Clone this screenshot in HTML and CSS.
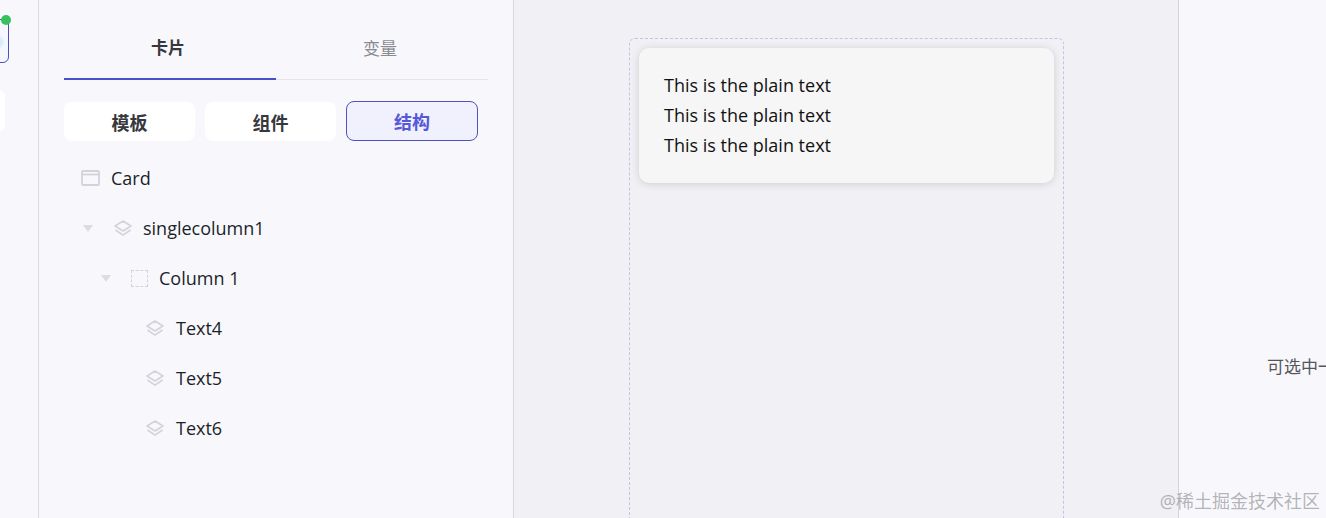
FILE: index.html
```html
<!DOCTYPE html>
<html lang="zh-CN">
<head>
  <meta charset="UTF-8" />
  <title>卡片</title>
  <link rel="stylesheet" href="styles.css">
</head>
<body>
  <svg class="defs" width="0" height="0">
    <symbol id="layers" viewBox="0 0 18 17">
      <path d="M9 1 17 6 9 11 1 6Z" fill="none" stroke="#d3d4d9" stroke-width="1.6" stroke-linejoin="round"/>
      <path d="M1.500 10 9 15.200 16.500 10" fill="none" stroke="#d3d4d9" stroke-width="1.6" stroke-linejoin="round"/>
    </symbol>
  </svg>

  <div class="app">
    <aside class="rail">
      <div class="rail-item active"><span class="dot"></span></div>
      <div class="rail-item plain"></div>
    </aside>

    <section class="panel">
      <div class="tabs">
        <div class="tab active">卡片</div>
        <div class="tab">变量</div>
      </div>

      <div class="switcher">
        <button class="switch">模板</button>
        <button class="switch">组件</button>
        <button class="switch selected">结构</button>
      </div>

      <ul class="tree">
        <li class="node">
          <svg class="icon" width="19" height="16" viewBox="0 0 19 16"><rect x="1" y="1" width="17" height="14" rx="1" fill="none" stroke="#d2d3d8" stroke-width="1.800"/><path d="M1 4.500h17" stroke="#d2d3d8" stroke-width="1.800"/></svg>
          <span>Card</span>
        </li>
        <li class="node level-1">
          <span class="caret"></span>
          <svg class="icon" width="18" height="17"><use href="#layers"/></svg>
          <span>singlecolumn1</span>
        </li>
        <li class="node level-2">
          <span class="caret"></span>
          <span class="column-icon"></span>
          <span>Column 1</span>
        </li>
        <li class="node level-3">
          <svg class="icon" width="18" height="17"><use href="#layers"/></svg>
          <span>Text4</span>
        </li>
        <li class="node level-3">
          <svg class="icon" width="18" height="17"><use href="#layers"/></svg>
          <span>Text5</span>
        </li>
        <li class="node level-3">
          <svg class="icon" width="18" height="17"><use href="#layers"/></svg>
          <span>Text6</span>
        </li>
      </ul>
    </section>

    <main class="canvas">
      <div class="frame">
        <div class="card">
          <p>This is the plain text</p>
          <p>This is the plain text</p>
          <p>This is the plain text</p>
        </div>
      </div>
    </main>

    <aside class="props">
      <span class="hint">可选中一个组件进行配置</span>
    </aside>
  </div>
  <div class="watermark">@稀土掘金技术社区</div>
</body>
</html>
```

FILE: styles.css
```css
* {
  margin: 0;
  padding: 0;
  box-sizing: border-box;
  font-family: "Open Sans", "Noto Sans CJK SC", sans-serif;
}

html, body {
  height: 518px;
  overflow: hidden;
}

body {
  background: #f8f8fc;
  color: #1c1f2a;
}

.defs {
  position: absolute;
}

.app {
  display: flex;
  height: 518px;
}

.rail {
  width: 68px;
  flex-shrink: 0;
  margin-left: -29px;
  padding-top: 19px;
  border-right: 1px solid #dcdce0;
}

.rail-item {
  position: relative;
  width: 38px;
  height: 44px;
  background: #fff;
  border-radius: 6px;
  margin-bottom: 27px;
}

.rail-item.active {
  background: radial-gradient(circle at 26px 22px, #d8ecfb 0 4px, #f4f7fd 7px);
  border: 1.500px solid #4a4fc4;
}

.rail-item.plain {
  width: 34px;
  height: 41px;
}

.dot {
  position: absolute;
  right: -3px;
  top: -5px;
  width: 10px;
  height: 10px;
  border-radius: 50%;
  background: #35c25a;
}

.panel {
  width: 475px;
  flex-shrink: 0;
  padding: 18px 25px 0;
  border-right: 1px solid #d8d8de;
}

.tabs {
  display: flex;
  height: 62px;
  border-bottom: 1px solid #e4e4ea;
}

.tab {
  width: 212px;
  height: 62px;
  line-height: 61px;
  padding-right: 4px;
  text-align: center;
  font-size: 17px;
  color: #8a8a8f;
}

.tab.active {
  line-height: 60px;
  color: #37383d;
  font-weight: 700;
  border-bottom: 2px solid #4a50cc;
}

.switcher {
  display: flex;
  align-items: flex-end;
  gap: 10px;
  height: 40px;
  margin-top: 21px;
}

.switch {
  width: 131px;
  height: 39px;
  border: none;
  border-radius: 8px;
  background: #fff;
  color: #37383d;
  font-size: 18px;
  font-weight: 700;
}

.switch.selected {
  width: 132px;
  height: 40px;
  background: #f0f1fd;
  border: 1px solid #4f52bf;
  color: #5558d8;
}

.tree {
  list-style: none;
  margin-top: 12px;
  padding-left: 17px;
}

.node {
  display: flex;
  align-items: center;
  height: 50px;
  font-size: 18px;
}

.icon {
  flex-shrink: 0;
  margin-right: 11px;
}

.level-1 {
  padding-left: 2px;
}

.level-2 {
  padding-left: 20px;
}

.level-3 {
  padding-left: 65px;
}

.level-3 .icon {
  margin-right: 12px;
}

.caret {
  width: 0;
  height: 0;
  border-left: 5px solid transparent;
  border-right: 5px solid transparent;
  border-top: 7px solid #dcdde2;
  margin-right: 21px;
}

.column-icon {
  width: 17px;
  height: 17px;
  border: 1px dashed #d2d2d9;
  margin-right: 11px;
}

.level-2 .caret {
  margin-right: 20px;
}

.canvas {
  flex: 0 0 665px;
  width: 665px;
  background: #f0f0f5;
  border-right: 1px solid #d4d4da;
  padding: 38px 0 0 115px;
}

.frame {
  width: 435px;
  height: 500px;
  border: 1px dashed #c4c0f0;
  border-radius: 6px;
  padding: 9px 9px;
}

.card {
  height: 135px;
  background: #f6f6f7;
  border-radius: 10px;
  padding: 22px 25px;
  box-shadow: 0 1px 8px rgba(0, 0, 0, 0.14);
  color: #111;
  font-size: 18px;
  line-height: 30px;
}

.props {
  flex: 1;
  position: relative;
  overflow: hidden;
}

.hint {
  position: absolute;
  left: 88px;
  top: 353px;
  white-space: nowrap;
  font-size: 17px;
  color: #55565c;
}

.watermark {
  position: absolute;
  right: 6px;
  bottom: 5px;
  font-size: 18px;
  color: rgba(120, 120, 125, 0.55);
  white-space: nowrap;
}
```
